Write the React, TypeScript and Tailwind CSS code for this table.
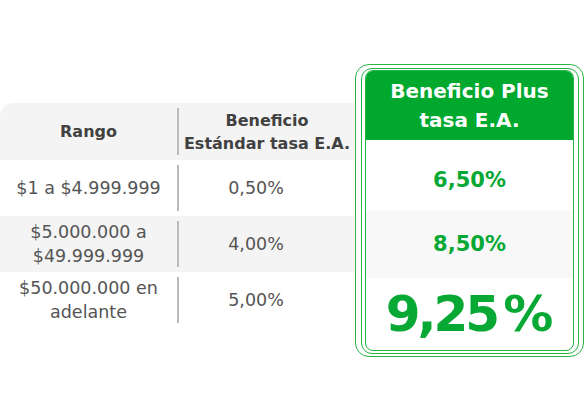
import React from "react";

const font = { fontFamily: '"DejaVu Sans", Verdana, sans-serif' };

function Divider() {
  return <div className="w-[2px] self-stretch my-[5px] bg-[#bcbcbc]" />;
}

function Row({ a, b, gray }: { a: React.ReactNode; b: string; gray?: boolean }) {
  return (
    <div className={`flex h-[56px] items-stretch ${gray ? "bg-[#f4f4f4]" : "bg-white"}`}>
      <div className="w-[177px] flex items-center justify-center text-center text-[17.5px] leading-[24px] text-[#555]">
        {a}
      </div>
      <Divider />
      <div className="flex-1 flex items-center justify-center pr-[22px] text-[17.5px] text-[#555]">
        {b}
      </div>
    </div>
  );
}

export default function App() {
  return (
    <div className="w-[587px] h-[420px] bg-white relative overflow-hidden" style={font}>
      <div className="flex items-start">
        <div className="w-[355px] mt-[103px]">
          <div className="flex h-[57px] items-stretch bg-[#f4f4f4] rounded-tl-[14px]">
            <div className="w-[177px] flex items-center justify-center font-bold text-[16px] text-[#414141]">
              Rango
            </div>
            <Divider />
            <div className="flex-1 flex items-center justify-center text-center font-bold text-[16px] leading-[23px] text-[#414141] whitespace-nowrap">
              Beneficio
              <br />
              Estándar tasa E.A.
            </div>
          </div>
          <Row a="$1 a $4.999.999" b="0,50%" />
          <Row
            gray
            a={
              <span>
                $5.000.000 a<br />$49.999.999
              </span>
            }
            b="4,00%"
          />
          <Row
            a={
              <span>
                $50.000.000 en<br />adelante
              </span>
            }
            b="5,00%"
          />
        </div>
        <div className="mt-[64px] w-[229px] h-[293px] border-[1.5px] border-[#27b544] rounded-[14px] px-[4.5px] pt-[2.5px] pb-[2px]">
          <div className="h-full border-[1.5px] border-[#27b544] rounded-[11px] px-[3.5px] pt-[1.5px] pb-[2.5px]">
            <div className="h-full border-[1.5px] border-[#27b544] rounded-[8px] overflow-hidden flex flex-col bg-white">
              <div className="h-[69px] bg-[#00a82d] flex items-center justify-center text-center text-white font-bold text-[20px] leading-[29px]">
                Beneficio Plus
                <br />
                tasa E.A.
              </div>
              <div className="h-[71px] flex items-center justify-center pt-[10px] text-[#07a834] font-bold text-[21px]">
                6,50%
              </div>
              <div className="h-[67px] bg-[#f8f8f8] flex items-center justify-center text-[#07a834] font-bold text-[21px]">
                8,50%
              </div>
              <div className="flex-1 flex items-center justify-center text-[#07a834] font-bold text-[50px] leading-none">
                <span className="tracking-[-3px]">9,25</span>
                <span className="ml-[6px]">%</span>
              </div>
            </div>
          </div>
        </div>
      </div>
    </div>
  );
}
